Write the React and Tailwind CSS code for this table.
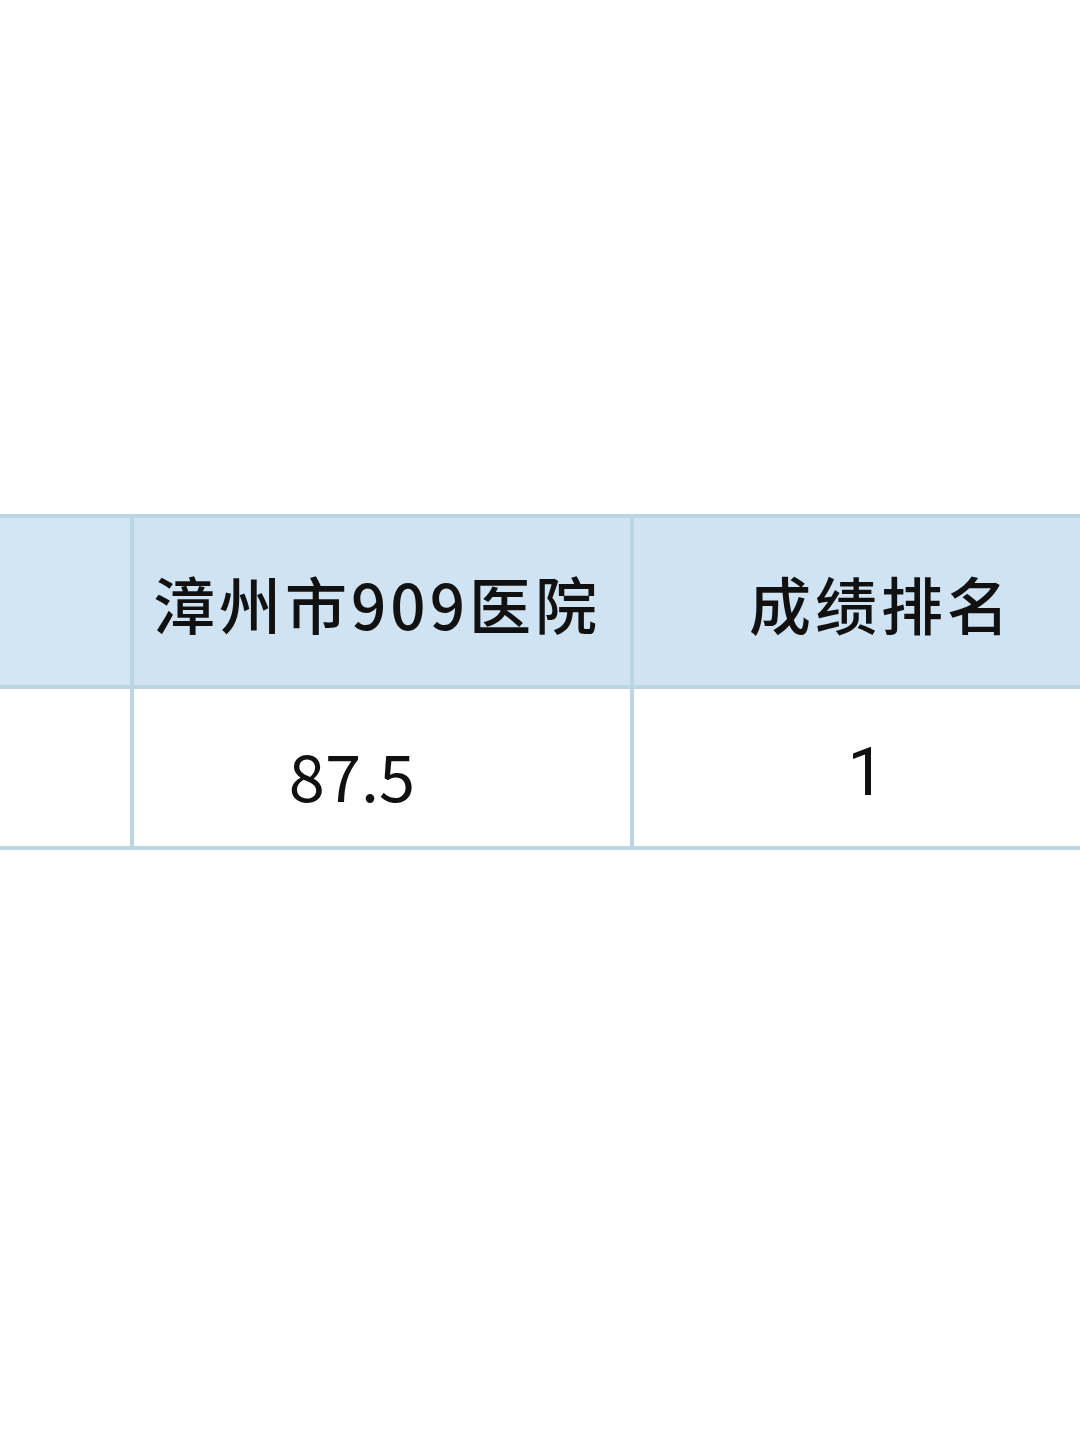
export default function App() {
  const font = { fontFamily: '"Noto Sans CJK SC", "Noto Sans", sans-serif' };
  return (
    <div className="w-[1080px] h-[1443px] overflow-hidden bg-white" style={font}>
      <div className="pt-[514px]">
        <div className="w-[1120px] border-y-4 border-[#bcd5e2]">
          {/* header row */}
          <div className="flex h-[171px] bg-[#cfe3f3] border-b-4 border-[#bcd5e2] text-[#111] text-[62px] font-medium tracking-[4px]">
            <div className="w-[130px] bg-[#d3e6f4]"></div>
            <div className="w-[500px] border-l-4 border-[#bcd5e2] flex items-center justify-center pr-[10px] pt-[4px]">
              漳州市909医院
            </div>
            <div className="w-[490px] border-l-4 border-[#bcd5e2] flex items-center justify-center pl-[8px] pt-[4px]">
              成绩排名
            </div>
          </div>
          {/* body row */}
          <div className="flex h-[157px] bg-white text-[#111] text-[65px]">
            <div className="w-[130px]"></div>
            <div className="w-[500px] border-l-4 border-[#bcd5e2] flex items-center justify-center pr-[60px] pt-[14px]">
              87.5
            </div>
            <div className="w-[490px] border-l-4 border-[#bcd5e2] flex items-center justify-center pr-[22px] pt-[10px] font-['Roboto'] text-[66px]">
              1
            </div>
          </div>
        </div>
      </div>
    </div>
  );
}
